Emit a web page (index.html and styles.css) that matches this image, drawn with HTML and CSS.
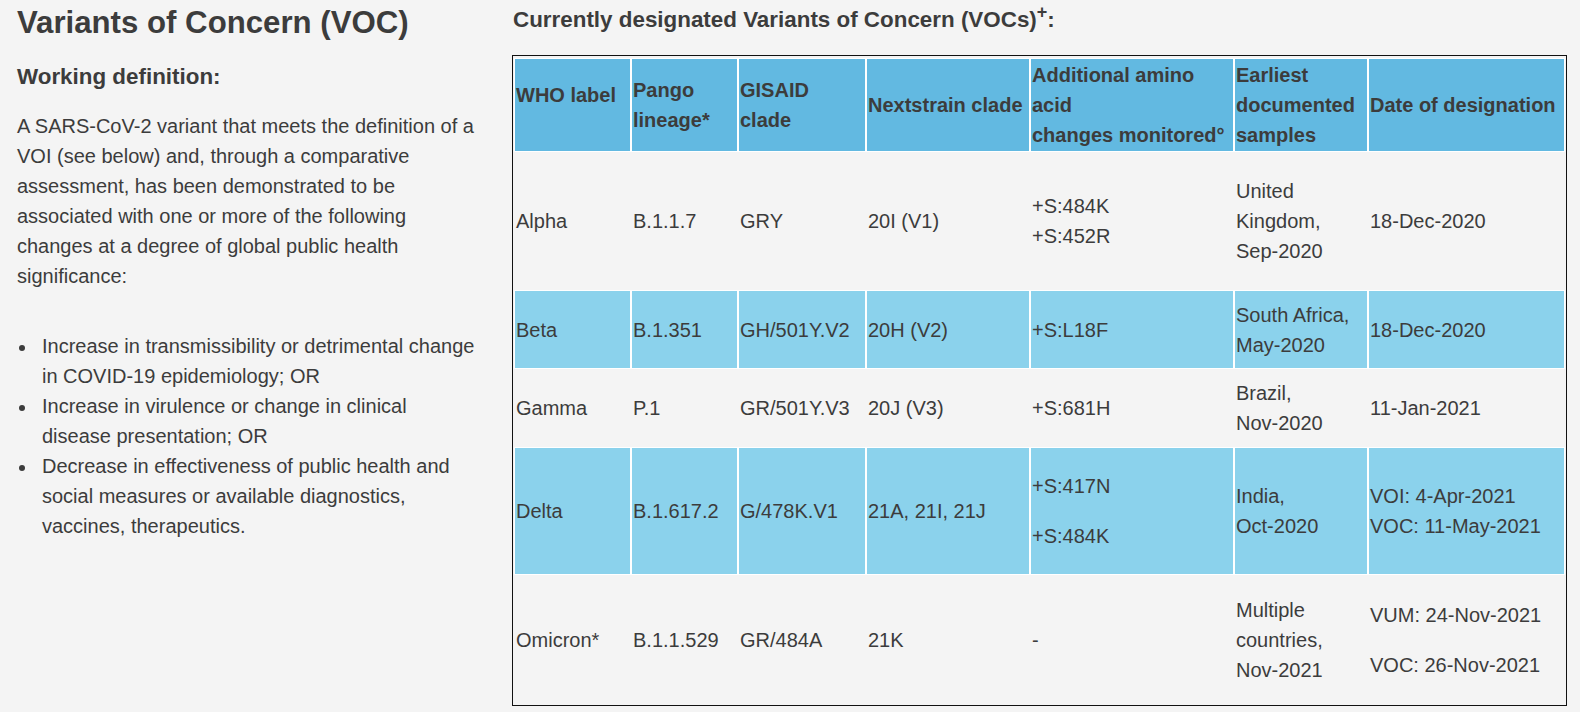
FILE: index.html
```html
<!DOCTYPE html>
<html lang="en">
<head>
<meta charset="utf-8">
<title>Variants of Concern (VOC)</title>
<link rel="stylesheet" href="styles.css">
</head>
<body>
<div class="page">
  <section class="intro">
    <h1 class="title">Variants of Concern (VOC)</h1>
    <h2 class="subhead">Working definition:</h2>
    <p class="def">A SARS-CoV-2 variant that meets the definition of a VOI (see below) and, through a comparative assessment, has been demonstrated to be associated with one or more of the following changes at a degree of global public health significance:</p>
    <ul class="criteria">
      <li>Increase in transmissibility or detrimental change in COVID-19 epidemiology; OR</li>
      <li>Increase in virulence or change in clinical disease presentation; OR</li>
      <li>Decrease in effectiveness of public health and social measures or available diagnostics, vaccines, therapeutics.</li>
    </ul>
  </section>
  <section class="listing">
    <h2 class="subhead heading">Currently designated Variants of Concern (VOCs)<sup class="mark">+</sup>:</h2>
    <table class="voc">
      <colgroup>
        <col class="c1"><col class="c2"><col class="c3"><col class="c4"><col class="c5"><col class="c6"><col class="c7">
      </colgroup>
      <thead>
        <tr class="row-head blue-head">
          <th class="who">WHO label</th>
          <th>Pango<br>lineage*</th>
          <th>GISAID<br>clade</th>
          <th>Nextstrain clade</th>
          <th>Additional amino<br>acid<br>changes monitored°</th>
          <th>Earliest<br>documented<br>samples</th>
          <th>Date of designation</th>
        </tr>
      </thead>
      <tbody>
        <tr class="row-alpha">
          <td>Alpha</td>
          <td>B.1.1.7</td>
          <td>GRY</td>
          <td>20I (V1)</td>
          <td>+S:484K<br>+S:452R</td>
          <td>United<br>Kingdom,<br>Sep-2020</td>
          <td>18-Dec-2020</td>
        </tr>
        <tr class="row-beta blue">
          <td>Beta</td>
          <td>B.1.351</td>
          <td>GH/501Y.V2</td>
          <td>20H (V2)</td>
          <td>+S:L18F</td>
          <td>South Africa,<br>May-2020</td>
          <td>18-Dec-2020</td>
        </tr>
        <tr class="row-gamma">
          <td>Gamma</td>
          <td>P.1</td>
          <td>GR/501Y.V3</td>
          <td>20J (V3)</td>
          <td>+S:681H</td>
          <td>Brazil,<br>Nov-2020</td>
          <td>11-Jan-2021</td>
        </tr>
        <tr class="row-delta blue">
          <td>Delta</td>
          <td>B.1.617.2</td>
          <td>G/478K.V1</td>
          <td>21A, 21I, 21J</td>
          <td><p class="entry">+S:417N</p><p class="entry spaced">+S:484K</p></td>
          <td>India,<br>Oct-2020</td>
          <td>VOI: 4-Apr-2021<br>VOC: 11-May-2021</td>
        </tr>
        <tr class="row-omicron">
          <td>Omicron*</td>
          <td>B.1.1.529</td>
          <td>GR/484A</td>
          <td>21K</td>
          <td>-</td>
          <td>Multiple<br>countries,<br>Nov-2021</td>
          <td><p class="entry">VUM: 24-Nov-2021</p><p class="entry spaced">VOC: 26-Nov-2021</p></td>
        </tr>
      </tbody>
    </table>
  </section>
</div>
</body>
</html>
```

FILE: styles.css
```css
html, body {
  margin: 0;
  padding: 0;
  background: #f4f4f4;
}

body {
  font-family: "Liberation Sans", Arial, sans-serif;
  color: #3c3c3c;
  font-size: 20px;
  line-height: 30px;
}

.page {
  display: flex;
  align-items: flex-start;
  gap: 32px;
  padding-left: 17px;
}

.intro {
  width: 463px;
  flex: 0 0 463px;
}

.title {
  margin: 5px 0 0;
  font-size: 31.2px;
  line-height: 36px;
  font-weight: bold;
}

.subhead {
  margin: 21px 0 0;
  font-size: 22.4px;
  line-height: 30px;
  font-weight: bold;
}

.def {
  margin: 19px 0 0;
}

.criteria {
  list-style: none;
  margin: 40px 0 0;
  padding: 0;
}

.criteria li {
  padding-left: 25px;
}

.criteria li::before {
  content: "";
  display: inline-block;
  width: 6px;
  height: 6px;
  border-radius: 50%;
  background: #3c3c3c;
  vertical-align: middle;
  margin-left: -23px;
  margin-right: 17px;
}

.listing {
  flex: 0 0 1055px;
  width: 1055px;
}

.heading {
  margin: 5px 0 20px;
  padding-left: 1px;
}

.mark {
  font-size: 18px;
  font-weight: bold;
  line-height: 0;
  vertical-align: 9px;
}

.voc {
  width: 1055px;
  table-layout: fixed;
  border-collapse: separate;
  border-spacing: 0;
  border: 1px solid #111;
  padding: 2px 1px 1px 1px;
}

.c1 { width: 117px; }
.c2 { width: 107px; }
.c3 { width: 128px; }
.c4 { width: 164px; }
.c5 { width: 204px; }
.c6 { width: 134px; }
.c7 { width: 197px; }

.voc th,
.voc td {
  border: 1px solid transparent;
  padding: 0 1px;
  text-align: left;
  vertical-align: middle;
  font-size: 20px;
  line-height: 30px;
  white-space: nowrap;
}

.voc th {
  font-weight: bold;
}

.blue-head th {
  background: #62b9e1;
  border-color: #ffffff;
}

.blue td {
  background: #8bd2ec;
  border-color: #ffffff;
}

.voc th.who {
  padding-bottom: 20px;
}

.row-head { height: 94px; }
.row-alpha { height: 138px; }
.row-beta { height: 79px; }
.row-gamma { height: 78px; }
.row-delta { height: 128px; }
.row-omicron { height: 129px; }

.entry {
  margin: 0;
}

.entry.spaced {
  margin-top: 20px;
}
```
